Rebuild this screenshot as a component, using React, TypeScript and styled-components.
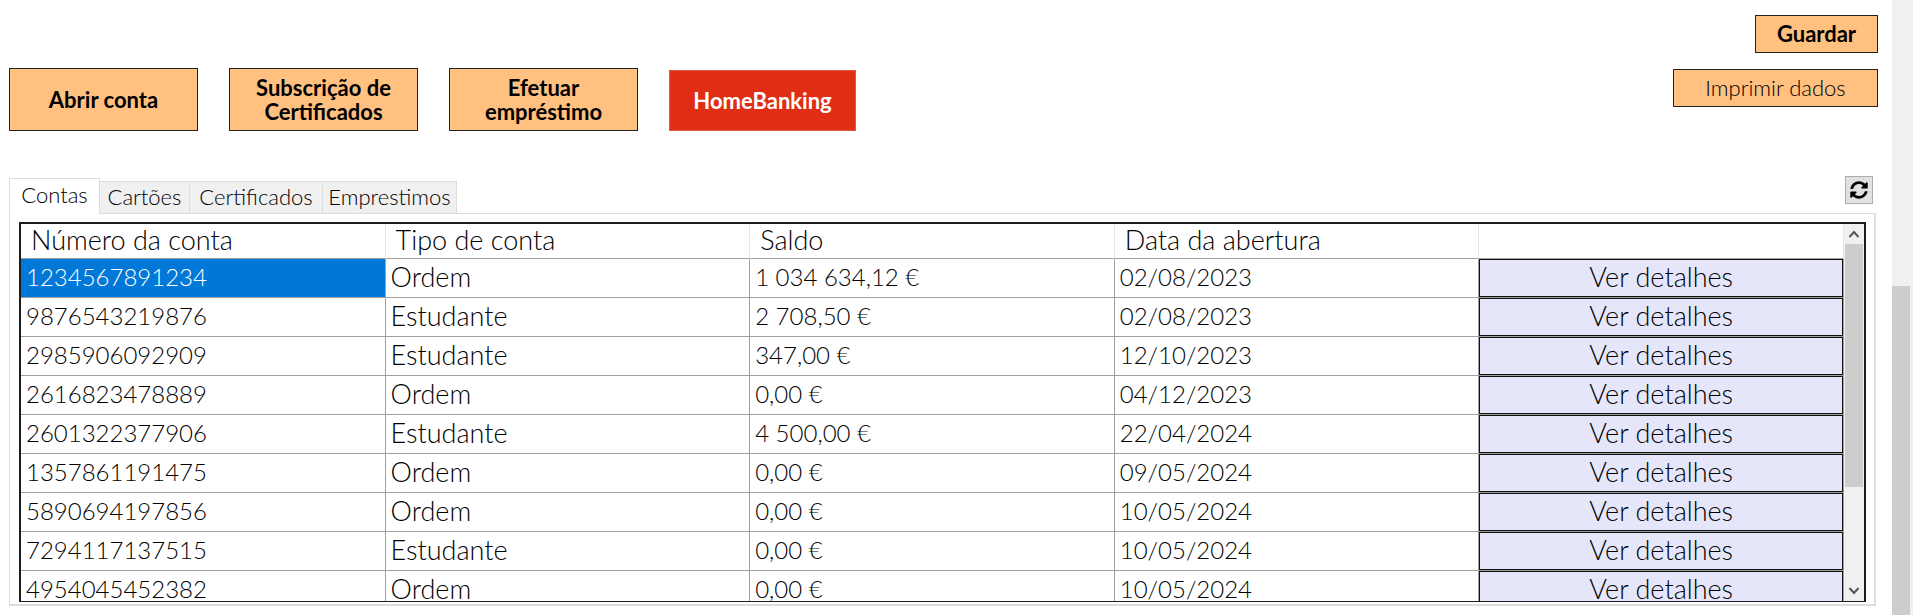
import React, { useState } from "react";
import styled, { createGlobalStyle, css } from "styled-components";
import { FaSyncAlt } from "react-icons/fa";

const GlobalStyle = createGlobalStyle`
  *, *::before, *::after { box-sizing: border-box; }
  body {
    margin: 0;
    background: #fff;
    color: #000;
    font-family: "Century Gothic", Lato, "Open Sans", sans-serif;
    font-weight: 300;
  }
  button { font-family: inherit; color: inherit; cursor: pointer; }
`;

const Window = styled.div`
  display: grid;
  grid-template-columns: minmax(0, 1fr) 21px;
  min-height: 100vh;
`;

const Content = styled.main`
  padding: 15px 14px 10px 9px;
`;

const Toolbar = styled.header`
  display: flex;
  justify-content: space-between;
  align-items: flex-start;
`;

const MainActions = styled.div`
  display: flex;
  align-items: flex-end;
  gap: 31px;
  padding-top: 53px;
`;

const SideActions = styled.div`
  display: flex;
  flex-direction: column;
  align-items: flex-end;
  gap: 16px;
`;

const OrangeButton = styled.button`
  border: 1px solid #222;
  border-radius: 0;
  background: #ffc080;
  padding: 0 16px;
  font-size: 22px;
  line-height: 24px;
`;

const ActionButton = styled(OrangeButton)`
  width: 189px;
  height: 63px;
  font-weight: 700;
`;

const HomeBankingButton = styled(ActionButton)`
  width: 187px;
  height: 61px;
  border-color: #e8563d;
  background: #df2e14;
  color: #fff;
`;

const SideButton = styled(OrangeButton)<{ $width: number; $bold?: boolean }>`
  width: ${(p) => p.$width}px;
  height: 38px;
  font-weight: ${(p) => (p.$bold ? 700 : 300)};
`;

const TabRow = styled.div`
  display: flex;
  justify-content: space-between;
  align-items: flex-end;
  margin: 45px 5px 0 0;
`;

const TabList = styled.div`
  display: flex;
  align-items: flex-end;
  height: 36px;
`;

const Tab = styled.button<{ $width: number; $active: boolean }>`
  width: ${(p) => p.$width}px;
  height: 32px;
  padding: 0 0 2px;
  border: 1px solid #dcdcdc;
  border-left-width: 0;
  border-bottom-width: 0;
  background: #f0f0f0;
  font-size: 22px;
  font-weight: 300;
  line-height: 24px;
  white-space: nowrap;
  ${(p) =>
    p.$active &&
    css`
      position: relative;
      height: 36px;
      margin-bottom: -1px;
      padding-bottom: 4px;
      border-left-width: 1px;
      background: #fff;
    `}
`;

const RefreshButton = styled.button`
  display: flex;
  align-items: center;
  justify-content: center;
  width: 28px;
  height: 28px;
  margin-bottom: 9px;
  padding: 0;
  border: 1px solid #adadad;
  background: #e1e1e1;
`;

const Panel = styled.section`
  margin-right: 2px;
  padding: 8px 8px 2px 9px;
  border: 1px solid #dcdcdc;
  border-right-width: 2px;
  border-bottom-width: 2px;
`;

const Grid = styled.div`
  display: grid;
  grid-template-columns: minmax(0, 1fr) 20px;
  height: 380px;
  border: 2px solid #1c1c1c;
  border-bottom-width: 1px;
  overflow: hidden;
`;

const TableView = styled.div`
  overflow: hidden;
`;

const Table = styled.table`
  width: 100%;
  table-layout: fixed;
  border-collapse: separate;
  border-spacing: 0;
`;

const HeadCell = styled.th`
  height: 35px;
  padding: 0 0 2px 10px;
  border-right: 1px solid #e5e5e5;
  border-bottom: 1px solid #a0a0a0;
  font-size: 27px;
  font-weight: 300;
  line-height: 30px;
  text-align: left;
`;

const Cell = styled.td<{ $selected?: boolean; $words?: boolean }>`
  height: 39px;
  padding: 0 0 2px 5px;
  border-right: 1px solid #a0a0a0;
  border-bottom: 1px solid #a0a0a0;
  background: ${(p) => (p.$selected ? "#0078d7" : "#fff")};
  color: ${(p) => (p.$selected ? "#fff" : "inherit")};
  font-size: ${(p) => (p.$words ? 27 : 24)}px;
  line-height: 30px;
`;

const ButtonCell = styled(Cell)`
  padding: 0;
`;

const DetailsButton = styled.button`
  display: block;
  width: 100%;
  height: 38px;
  padding: 0 0 2px;
  border: 1px solid #111;
  background: #e6e6fa;
  font-size: 27px;
  font-weight: 300;
  line-height: 30px;
`;

const ScrollTrack = styled.div`
  display: flex;
  flex-direction: column;
  align-items: center;
  background: #f0f0f0;
`;

const ScrollArrow = styled.svg`
  flex: none;
  width: 20px;
  height: 20px;
  fill: none;
  stroke: #555;
  stroke-width: 2;
`;

const ScrollBody = styled.div`
  flex: 1;
  width: 18px;
`;

const ScrollThumb = styled.div`
  height: 72%;
  background: #cdcdcd;
`;

const PageScroll = styled.div`
  display: grid;
  grid-template-rows: 286fr 329fr;
  padding-right: 3px;
  background: #f0f0f0;
`;

const PageThumb = styled.div`
  grid-row: 2;
  background: #cdcdcd;
`;

const tabs = [
  { label: "Contas", width: 91 },
  { label: "Cartões", width: 90 },
  { label: "Certificados", width: 133 },
  { label: "Emprestimos", width: 134 },
];

const columns = ["Número da conta", "Tipo de conta", "Saldo", "Data da abertura"];

const accounts = [
  ["1234567891234", "Ordem", "1 034 634,12 €", "02/08/2023"],
  ["9876543219876", "Estudante", "2 708,50 €", "02/08/2023"],
  ["2985906092909", "Estudante", "347,00 €", "12/10/2023"],
  ["2616823478889", "Ordem", "0,00 €", "04/12/2023"],
  ["2601322377906", "Estudante", "4 500,00 €", "22/04/2024"],
  ["1357861191475", "Ordem", "0,00 €", "09/05/2024"],
  ["5890694197856", "Ordem", "0,00 €", "10/05/2024"],
  ["7294117137515", "Estudante", "0,00 €", "10/05/2024"],
  ["4954045452382", "Ordem", "0,00 €", "10/05/2024"],
];

export default function App() {
  const [active, setActive] = useState("Contas");

  return (
    <>
      <GlobalStyle />
      <Window>
        <Content>
          <Toolbar>
            <MainActions>
              <ActionButton>Abrir conta</ActionButton>
              <ActionButton>Subscrição de Certificados</ActionButton>
              <ActionButton>Efetuar empréstimo</ActionButton>
              <HomeBankingButton>HomeBanking</HomeBankingButton>
            </MainActions>
            <SideActions>
              <SideButton $width={123} $bold>Guardar</SideButton>
              <SideButton $width={205}>Imprimir dados</SideButton>
            </SideActions>
          </Toolbar>

          <TabRow>
            <TabList role="tablist">
              {tabs.map((tab) => (
                <Tab
                  key={tab.label}
                  role="tab"
                  aria-selected={tab.label === active}
                  $width={tab.width}
                  $active={tab.label === active}
                  onClick={() => setActive(tab.label)}
                >
                  {tab.label}
                </Tab>
              ))}
            </TabList>
            <RefreshButton aria-label="Atualizar">
              <FaSyncAlt size={18} color="#000" />
            </RefreshButton>
          </TabRow>

          <Panel>
            <Grid>
              <TableView>
                <Table>
                  <thead>
                    <tr>
                      {columns.map((name) => (
                        <HeadCell key={name} scope="col">{name}</HeadCell>
                      ))}
                      <HeadCell />
                    </tr>
                  </thead>
                  <tbody>
                    {accounts.map((account, row) => (
                      <tr key={account[0]}>
                        {account.map((value, col) => (
                          <Cell
                            key={col}
                            $selected={row === 0 && col === 0}
                            $words={col === 1}
                          >
                            {value}
                          </Cell>
                        ))}
                        <ButtonCell>
                          <DetailsButton>Ver detalhes</DetailsButton>
                        </ButtonCell>
                      </tr>
                    ))}
                  </tbody>
                </Table>
              </TableView>
              <ScrollTrack aria-hidden="true">
                <ScrollArrow viewBox="0 0 20 20"><path d="M5.5 13 10 8l4.5 5" /></ScrollArrow>
                <ScrollBody><ScrollThumb /></ScrollBody>
                <ScrollArrow viewBox="0 0 20 20"><path d="M5.5 7 10 12l4.5-5" /></ScrollArrow>
              </ScrollTrack>
            </Grid>
          </Panel>
        </Content>
        <PageScroll aria-hidden="true"><PageThumb /></PageScroll>
      </Window>
    </>
  );
}
